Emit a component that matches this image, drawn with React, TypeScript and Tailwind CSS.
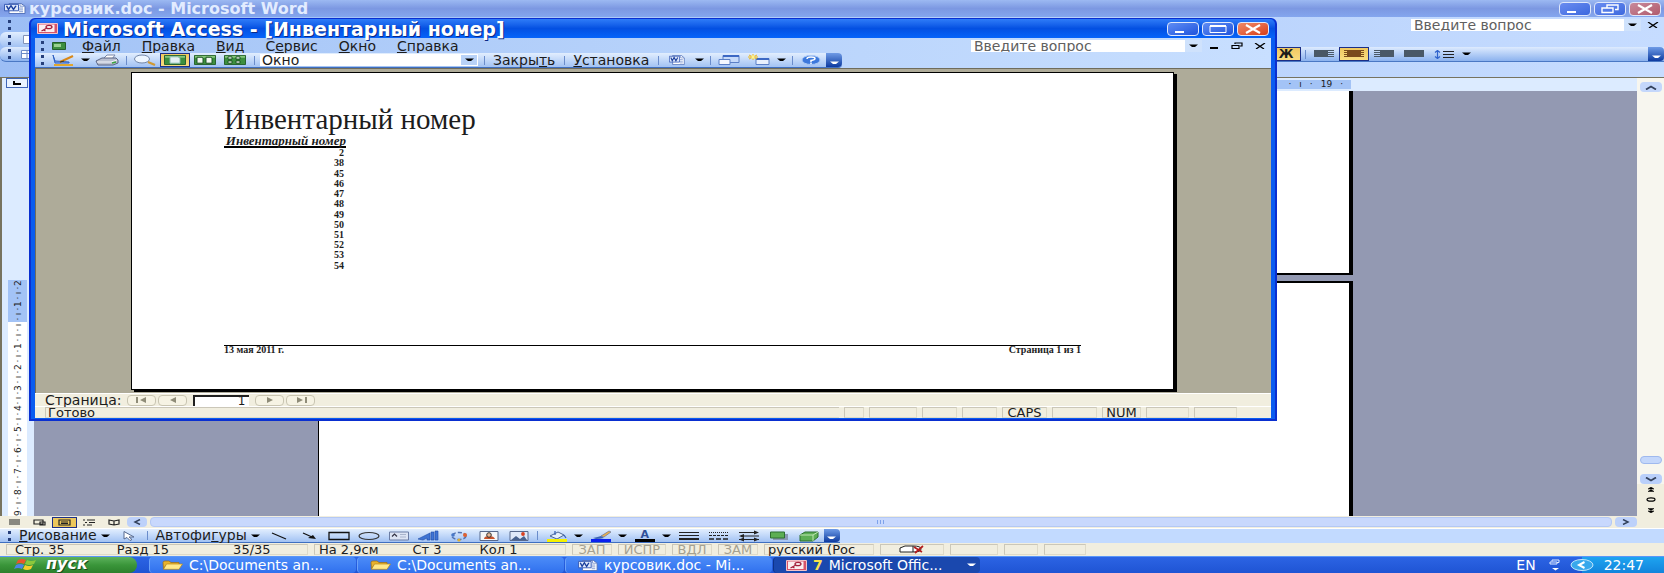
import { type ReactNode } from "react";

const reportRows = [2, 38, 45, 46, 47, 48, 49, 50, 51, 52, 53, 54];

const accessMenu = [
  { key: "Ф", rest: "айл", before: "" },
  { key: "П", rest: "равка", before: "" },
  { key: "В", rest: "ид", before: "" },
  { key: "е", rest: "рвис", before: "С" },
  { key: "О", rest: "кно", before: "" },
  { key: "С", rest: "правка", before: "" },
];

const rulerMarks = Array.from({ length: 45 }, (_, index) => {
  if (index % 4 === 1 || index % 4 === 3) return "·";
  if (index % 4 === 2) return "ı";
  const value = Math.abs(index / 4 - 2);
  return value === 0 ? "ı" : String(value);
});

function Svg({ children, className = "h-3 w-6", box = "0 0 24 12" }: { children: ReactNode; className?: string; box?: string }) {
  return (
    <svg aria-hidden="true" className={`shrink-0 ${className}`} fill="none" preserveAspectRatio="none" viewBox={box}>
      {children}
    </svg>
  );
}

function Caret({ className = "text-black" }: { className?: string }) {
  return (
    <Svg box="0 0 9 4" className={`h-1 w-[9px] ${className}`}>
      <path d="M0 .5h9L6 3H3z" fill="currentColor" />
    </Svg>
  );
}

function Grip() {
  return <span className="mx-1 h-[10px] w-[3px] shrink-0 border-l-[3px] border-dotted border-[#26407c]" />;
}

function Separator() {
  return (
    <span className="flex w-2 shrink-0 justify-center">
      <span className="h-[9px] w-px bg-[#6a8ccb]" />
    </span>
  );
}

function ToolButton({ active, children, label }: { active?: boolean; children: ReactNode; label: string }) {
  return (
    <button
      aria-label={label}
      className={`flex h-[14px] w-[30px] shrink-0 items-center justify-center ${
        active ? "border border-[#1c2f86] bg-gradient-to-b from-[#f0c860] to-[#f8dc80]" : ""
      }`}
      type="button"
    >
      {children}
    </button>
  );
}

function DropButton({ label }: { label: string }) {
  return (
    <button aria-label={label} className="flex h-[14px] w-[14px] shrink-0 items-center justify-center" type="button">
      <Caret />
    </button>
  );
}

function TextButton({ children }: { children: ReactNode }) {
  return (
    <button className="shrink-0 px-[5px] text-[14px] leading-[14px] whitespace-nowrap" type="button">
      {children}
    </button>
  );
}

function EndCap() {
  return (
    <button
      aria-label="Параметры панелей инструментов"
      className="flex w-4 shrink-0 items-end justify-center self-stretch rounded-r-sm bg-gradient-to-b from-[#6f9be6] to-[#0d3aa0] pb-[2px]"
      type="button"
    >
      <Caret className="text-white" />
    </button>
  );
}

function WordIcon({ className = "h-[11px] w-[22px]" }: { className?: string }) {
  return (
    <Svg box="0 0 22 12" className={className}>
      <path d="M5 .5h12l4 3v8H5z" fill="#fff" stroke="#5070b8" />
      <path d="M16 .5v3h5M15 5.5h4M15 7.5h4M15 9.5h4" stroke="#7d96cf" />
      <path d="M.5 1.500h14v7h-14z" fill="#dfe9fb" stroke="#3358b4" />
      <path d="M2.500 3l2 4 2.500-4 2.500 4 2.500-4" stroke="#1b3f9c" strokeWidth="1.500" />
    </Svg>
  );
}

function AccessIcon({ className = "h-[11px] w-[21px]" }: { className?: string }) {
  return (
    <Svg box="0 0 21 11" className={className}>
      <path d="M.5.5h20v10H.5z" fill="#d8546a" stroke="#f3c3c8" />
      <path d="M2 1.500h15.500v7.500H2z" fill="#fbeef0" />
      <ellipse cx="12" cy="4" rx="3" ry="1.700" stroke="#a3203a" strokeWidth="1.300" />
      <path d="M9.500 5.200L4.500 8M6.500 7l2 1" stroke="#a3203a" strokeWidth="1.300" />
    </Svg>
  );
}

function FolderIcon() {
  return (
    <Svg box="0 0 21 10" className="h-[10px] w-[21px]">
      <path d="M1 2.500Q1 1 3 1h4l2 1.500h8V5H4L1.500 9z" fill="#e8b22c" stroke="#9c6c10" strokeWidth=".7" />
      <path d="M4.500 4H20.500L17 9.300H1.500z" fill="#ffe98a" stroke="#b98718" strokeWidth=".7" />
    </Svg>
  );
}

function WindowButton({ kind, muted }: { kind: "minimize" | "maximize" | "restore" | "close"; muted?: boolean }) {
  const tone =
    kind === "close"
      ? muted
        ? "bg-gradient-to-br from-[#c88a9c] to-[#b05a6c]"
        : "bg-gradient-to-br from-[#f08a68] to-[#d83a10]"
      : muted
        ? "bg-gradient-to-br from-[#6a8cf0] to-[#3c68de]"
        : "bg-gradient-to-br from-[#5f8cf4] to-[#1f52dc]";

  return (
    <button
      aria-label={kind}
      className={`flex h-[14px] w-8 items-center justify-center rounded-sm border border-[#dfe8fb] ${tone}`}
      type="button"
    >
      <Svg box="0 0 20 10" className="h-[10px] w-5">
        {kind === "minimize" && <path d="M2 8h9" stroke="#fff" strokeWidth="2" />}
        {kind === "maximize" && (
          <>
            <path d="M2 2h16v6.500H2z" stroke="#fff" />
            <path d="M2 2h16" stroke="#fff" strokeWidth="2" />
          </>
        )}
        {kind === "restore" && (
          <path d="M7 3.500V1h11v4.500h-3M2 4h11v4.500H2z" stroke="#fff" strokeWidth="1.400" />
        )}
        {kind === "close" && <path d="M3 1l14 8M17 1L3 9" stroke="#fff" strokeWidth="2.200" />}
      </Svg>
    </button>
  );
}

function AskBox({ className }: { className: string }) {
  return (
    <div className={`flex h-3 items-stretch bg-white ${className}`}>
      <input
        aria-label="Введите вопрос"
        className="min-w-0 flex-1 bg-white px-[3px] text-[14px] leading-3 outline-none placeholder:text-[#606060]"
        placeholder="Введите вопрос"
      />
      <button aria-label="Открыть список" className="flex w-[17px] items-center justify-center bg-[#cfe2fc]" type="button">
        <Caret />
      </button>
    </div>
  );
}

function SmallClose() {
  return (
    <button aria-label="Закрыть окно" className="flex h-3 w-[23px] items-center justify-center" type="button">
      <Svg box="0 0 12 6" className="h-[6px] w-3">
        <path d="M1 0l9 6M11 0L2 6" stroke="#000" strokeWidth="1.300" />
      </Svg>
    </button>
  );
}

function GreenPages({ count }: { count: number }) {
  return (
    <Svg box="0 0 22 11" className="h-[10px] w-[22px]">
      <path d="M.5.5h21v10H.5z" fill="#3d8f3f" stroke="#245f2a" />
      <path d="M1 1h20v2H1z" fill="#86c77c" />
      {count === 1 && <path d="M6 2h8l2 1.500V9H6z" fill="#e4f0f4" stroke="#8ba" />}
      {count === 2 && <path d="M3 2.500h5l1 1V9H3zM12 2.500h5l1 1V9h-6z" fill="#f4f8f4" stroke="#175020" />}
      {count === 4 && <path d="M4 2h4v2.500H4zM12 2h4v2.500h-4zM4 6.500h4V9H4zM12 6.500h4V9h-4z" fill="#f4f8f4" stroke="#175020" />}
    </Svg>
  );
}

function StatusPanel({ children, className, muted }: { children?: ReactNode; className: string; muted?: boolean }) {
  return (
    <div
      className={`flex h-[11px] shrink-0 items-center border border-[#cbc7b8] border-r-[#dedac8] border-b-[#dedac8] px-[2px] text-[13px] leading-[10px] whitespace-nowrap ${
        muted ? "text-[#a5a190]" : "text-[#202020]"
      } ${className}`}
    >
      {children}
    </div>
  );
}

function AccessToolbar() {
  return (
    <div className="flex">
      <div className="flex h-[15px] items-center rounded-r-sm border-b border-[#3f6fc0] bg-gradient-to-b from-[#e2eefe] to-[#a2c2f3] pl-[2px]">
        <Grip />
        <ToolButton label="Вид">
          <Svg>
            <path d="M2 1l2 8h14V8L4 7z" fill="#88aef0" stroke="#2f5fc0" />
            <path d="M3 11h19" stroke="#e2a62c" strokeWidth="2" />
            <path d="M9 8L22 2" stroke="#d98818" strokeWidth="2" />
            <path d="M9 8l4-1" stroke="#333" />
          </Svg>
        </ToolButton>
        <DropButton label="Варианты вида" />
        <ToolButton label="Печать">
          <Svg>
            <path d="M8 5l4-4h8l-3 4z" fill="#fff" stroke="#7a86a8" />
            <path d="M1 7l6-3h14l2 2v3l-5 2H3z" fill="#b9bfd0" stroke="#5a6484" />
            <path d="M2 8h14l6-2" stroke="#f2f4fa" />
            <path d="M17 9l4-1" stroke="#3aa440" strokeWidth="1.500" />
          </Svg>
        </ToolButton>
        <Separator />
        <ToolButton label="Масштаб">
          <Svg>
            <ellipse cx="9" cy="5" fill="#eef6ff" rx="7.500" ry="4" stroke="#7286a8" />
            <path d="M15 8l7 3" stroke="#d09a34" strokeWidth="2.200" />
          </Svg>
        </ToolButton>
        <ToolButton active label="Одна страница">
          <GreenPages count={1} />
        </ToolButton>
        <ToolButton label="Две страницы">
          <GreenPages count={2} />
        </ToolButton>
        <ToolButton label="Несколько страниц">
          <GreenPages count={4} />
        </ToolButton>
        <Separator />
        <div className="relative mx-[2px] w-[218px]">
          <select
            aria-label="Масштаб страницы"
            className="block h-3 w-full appearance-none bg-white px-[2px] text-[14px] leading-3 outline-none"
            defaultValue="Окно"
          >
            <option>Окно</option>
          </select>
          <span className="pointer-events-none absolute inset-y-px right-px flex w-4 items-center justify-center bg-[#b8d2f8]">
            <Caret />
          </span>
        </div>
        <Separator />
        <TextButton>
          Закры<u>т</u>ь
        </TextButton>
        <Separator />
        <TextButton>
          <u>У</u>становка
        </TextButton>
        <Separator />
        <ToolButton label="Связи с Office">
          <WordIcon className="h-[10px] w-4" />
        </ToolButton>
        <DropButton label="Варианты связи" />
        <Separator />
        <ToolButton label="Окно базы данных">
          <Svg>
            <path d="M6 1.500h16v7H6z" fill="#c6dafa" stroke="#5b7fc6" />
            <path d="M6 2h16" stroke="#3c68c4" strokeWidth="2" />
            <path d="M2 5.500h11v5H2z" fill="#f4f8ff" stroke="#5b7fc6" />
          </Svg>
        </ToolButton>
        <ToolButton label="Новый объект">
          <Svg>
            <path d="M9 4.500h13v6H9z" fill="#e8f0fe" stroke="#5b7fc6" />
            <path d="M9 5h13" stroke="#3c68c4" strokeWidth="2" />
            <path d="M1 3h10M6 0v6M2 1l8 4M10 1L2 5" stroke="#f0b818" />
            <circle cx="6" cy="3" fill="#fff38a" r="1.700" />
          </Svg>
        </ToolButton>
        <DropButton label="Варианты объекта" />
        <Separator />
        <ToolButton label="Справка">
          <Svg>
            <ellipse cx="12" cy="6" fill="#3c78dc" rx="9" ry="4.500" stroke="#a9c8f6" />
            <path d="M8 5q0-2 4-2t4 1.500Q16 6 12 6.500V8M12 8.500v1.500" stroke="#fff" strokeWidth="1.500" />
          </Svg>
        </ToolButton>
        <EndCap />
      </div>
    </div>
  );
}

function Report() {
  return (
    <div className="border border-black bg-white px-[92px] pt-9 pb-9 font-['Liberation_Serif',serif] shadow-[3px_2px_0_#000]">
      <h1 className="text-[29px] leading-5 whitespace-nowrap">Инвентарный номер</h1>
      <table className="mt-[7px] h-[135px] w-[122px] border-collapse">
        <thead>
          <tr>
            <th className="border-b-2 border-black text-right text-[13px] leading-[10px] font-bold whitespace-nowrap italic">
              Инвентарный номер
            </th>
          </tr>
        </thead>
        <tbody>
          {reportRows.map((row) => (
            <tr key={row}>
              <td className="pr-[2px] text-right text-[10px] leading-[10px] font-bold">{row}</td>
            </tr>
          ))}
        </tbody>
      </table>
      <div className="mt-[74px] flex justify-between border-t border-black text-[10px] leading-[7px] font-bold">
        <span>13 мая 2011 г.</span>
        <span>Страница 1 из 1</span>
      </div>
    </div>
  );
}

function RecordButton({ label, path }: { label: string; path: string }) {
  return (
    <button
      aria-label={label}
      className="flex h-[11px] w-[29px] items-center justify-center rounded-sm border border-[#c9c5b2] bg-[#f6f3e4]"
      type="button"
    >
      <Svg box="0 0 14 6" className="h-[6px] w-[14px]">
        <path d={path} fill="#8f8c78" />
      </Svg>
    </button>
  );
}

function AccessWindow() {
  return (
    <section
      aria-label="Microsoft Access"
      className="absolute top-[18px] left-[29px] w-3/4 rounded-t-md border-2 border-t border-[#0a2fd0] bg-[#0a5cf0]"
    >
      <header className="flex h-[19px] items-center rounded-t-md bg-gradient-to-b from-[#2f7cf8] via-[#0450e2] to-[#0664fa] pr-[6px] pl-[6px]">
        <AccessIcon />
        <h2 className="ml-[5px] text-[19px] leading-[18px] font-bold whitespace-nowrap text-white [text-shadow:1px_1px_0_#0a2a88]">
          Microsoft Access - [Инвентарный номер]
        </h2>
        <div className="ml-auto flex gap-[3px]">
          <WindowButton kind="minimize" />
          <WindowButton kind="maximize" />
          <WindowButton kind="close" />
        </div>
      </header>
      <div className="mx-1">
        <div className="bg-gradient-to-r from-[#a4c4f6] to-[#c8dfff]">
          <nav className="flex h-[15px] items-center pl-[2px]">
            <Grip />
            <Svg box="0 0 14 8" className="ml-1 h-2 w-[14px]">
              <path d="M.5.5h13v7H.5z" fill="#3d8f3f" stroke="#245f2a" />
              <path d="M2 2h7v3H2z" fill="#9ad290" />
            </Svg>
            <div className="ml-4 flex gap-[21px]">
              {accessMenu.map((item) => (
                <button className="text-[14px] leading-[14px]" key={item.rest} type="button">
                  {item.before}
                  <u>{item.key}</u>
                  {item.rest}
                </button>
              ))}
            </div>
            <AskBox className="ml-auto w-[231px]" />
            <button aria-label="Свернуть окно" className="flex h-3 w-[23px] items-center justify-center" type="button">
              <span className="mt-1 h-[2px] w-2 bg-black" />
            </button>
            <button aria-label="Восстановить окно" className="flex h-3 w-[23px] items-center justify-center" type="button">
              <Svg box="0 0 12 7" className="h-[7px] w-3">
                <path d="M4 2V1h7v3H9M1 3.500h7v3H1z" stroke="#000" strokeWidth="1.200" />
              </Svg>
            </button>
            <SmallClose />
          </nav>
          <AccessToolbar />
        </div>
        <main className="border-t border-l border-[#6f6c5c] bg-[#aeab99] pt-[3px] pr-[97px] pb-[3px] pl-[95px]">
          <Report />
        </main>
        <div className="flex h-[13px] items-center gap-[2px] border-t border-white bg-[#f1eedf] pl-[10px]">
          <label className="mr-1 text-[14px] leading-3" htmlFor="report-page">
            Страница:
          </label>
          <RecordButton label="Первая страница" path="M1 0h2v6H1zM11 0v6L5 3z" />
          <RecordButton label="Предыдущая страница" path="M10 0v6L4 3z" />
          <input
            className="mx-1 h-[11px] w-14 border-t-2 border-l-2 border-[#202020] bg-white pr-1 text-right text-[12px] leading-[9px] outline-none"
            defaultValue="1"
            id="report-page"
          />
          <RecordButton label="Следующая страница" path="M4 0v6l6-3z" />
          <RecordButton label="Последняя страница" path="M3 0v6l6-3zM11 0h2v6h-2z" />
        </div>
        <footer className="flex h-[12px] items-center gap-[5px] border-t border-white bg-[#f1eedf] pr-[34px] pl-[10px]">
          <StatusPanel className="mr-auto min-w-0 flex-1 border-r-0">Готово</StatusPanel>
          <StatusPanel className="w-5" />
          <StatusPanel className="w-12" />
          <StatusPanel className="w-[35px]" />
          <StatusPanel className="w-[35px]" />
          <StatusPanel className="w-[45px] justify-center">CAPS</StatusPanel>
          <StatusPanel className="w-[45px]" />
          <StatusPanel className="w-[39px] justify-center">NUM</StatusPanel>
          <StatusPanel className="w-[43px]" />
          <StatusPanel className="w-[43px]" />
        </footer>
      </div>
      <div className="h-px" />
    </section>
  );
}

function AlignIcon({ side, tone }: { side: "left" | "center" | "right" | "both"; tone: string }) {
  return (
    <Svg box="0 0 20 8" className="h-2 w-5">
      <path d="M0 .5h20M0 2.500h20M0 4.500h20M0 6.500h20" stroke={tone} />
      {side === "left" && <path d="M0 0h14v7H0z" fill={tone} />}
      {side === "center" && <path d="M3 0h14v7H3z" fill={tone} />}
      {side === "right" && <path d="M6 0h14v7H6z" fill={tone} />}
      {side === "both" && <path d="M0 0h20v7H0z" fill={tone} />}
    </Svg>
  );
}

function WordHeader() {
  return (
    <>
      <header className="flex h-[17px] shrink-0 items-center bg-gradient-to-b from-[#9cb9f2] via-[#7c98e2] to-[#84a6ee] pr-[3px] pl-1">
        <WordIcon />
        <h1 className="ml-[3px] text-[16px] leading-4 font-bold text-[#e2ecff]">курсовик.doc - Microsoft Word</h1>
        <div className="ml-auto flex gap-[3px]">
          <WindowButton kind="minimize" muted />
          <WindowButton kind="restore" muted />
          <WindowButton kind="close" muted />
        </div>
      </header>
      <div className="h-[60px] shrink-0 bg-gradient-to-r from-[#9cbef5] to-[#c6dcff]">
        <div className="flex h-[15px] items-center justify-between pl-1">
          <Grip />
          <div className="flex items-center">
            <AskBox className="w-[230px]" />
            <SmallClose />
          </div>
        </div>
        <div className="flex h-[15px] items-center rounded-l-md">
          <div className="flex h-[15px] w-1/2 items-center rounded-l-md bg-gradient-to-b from-[#e2eefe] to-[#a2c2f3] pl-1">
            <Grip />
            <Svg box="0 0 12 9" className="ml-2 h-[9px] w-3">
              <path d="M.5.5h11v8H.5z" fill="#fff" stroke="#8292b8" />
            </Svg>
          </div>
        </div>
        <div className="flex h-[15px] items-center rounded-l-md border-b border-[#4a78c4] bg-gradient-to-b from-[#deebfe] to-[#8cb2ee] pl-1">
          <Grip />
          <Svg box="0 0 16 9" className="ml-[6px] h-[9px] w-4">
            <path d="M.5.5h15v8H.5z" fill="#fff" stroke="#6f8cc8" />
            <path d="M0 3.500h16M6 0v9" stroke="#6f8cc8" />
            <path d="M9 7l6-5" stroke="#d98818" strokeWidth="2" />
          </Svg>
          <div className="ml-auto flex items-center self-stretch">
            <ToolButton active label="Полужирный">
              <span className="text-[12px] leading-3 font-bold">Ж</span>
            </ToolButton>
            <Separator />
            <ToolButton label="По левому краю">
              <AlignIcon side="left" tone="#4a5866" />
            </ToolButton>
            <ToolButton active label="По центру">
              <AlignIcon side="center" tone="#7a4a1c" />
            </ToolButton>
            <ToolButton label="По правому краю">
              <AlignIcon side="right" tone="#4a5866" />
            </ToolButton>
            <ToolButton label="По ширине">
              <AlignIcon side="both" tone="#4a5866" />
            </ToolButton>
            <ToolButton label="Междустрочный интервал">
              <Svg box="0 0 20 9" className="h-[9px] w-5">
                <path d="M3.500 1v7M1 2.500L3.500.5 6 2.500M1 6.500l2.500 2 2.500-2" stroke="#2f62cc" strokeWidth="1.200" />
                <path d="M9 1.500h11M9 4.500h11M9 7.500h11" stroke="#222" />
              </Svg>
            </ToolButton>
            <DropButton label="Варианты интервала" />
            <span className="w-[175px]" />
            <EndCap />
          </div>
        </div>
      </div>
    </>
  );
}

function WordDocument() {
  return (
    <div className="flex min-h-0 flex-1 border-t border-l-2 border-[#77735f] bg-[#dcebff]">
      <div className="flex w-8 shrink-0 flex-col items-start">
        <button
          aria-label="Позиция табуляции"
          className="ml-1 flex h-[10px] w-[22px] shrink-0 items-center justify-center border border-[#3f66b8] bg-[#eaf3ff]"
          type="button"
        >
          <span className="h-1 w-2 border-b-2 border-l-2 border-black" />
        </button>
        <div className="mt-[192px] ml-[6px] grid w-[19px] flex-1 auto-rows-fr bg-[linear-gradient(#a3c3f6_0_42px,#fff_42px)] text-[9px] leading-none">
          {rulerMarks.map((mark, index) => (
            <span className="flex h-1 -rotate-90 items-center justify-center self-center" key={index}>
              {mark}
            </span>
          ))}
        </div>
      </div>
      <div className="flex min-w-0 flex-1 flex-col">
        <div className="flex h-[13px] shrink-0 items-center">
          <div className="mr-[286px] ml-auto flex h-[9px] w-20 items-center justify-end gap-2 bg-[#a3c3f6] pr-2 text-[9px] leading-[9px]">
            <span>·</span>
            <span>ı</span>
            <span>·</span>
            <span>19</span>
            <span>·</span>
          </div>
        </div>
        <div className="flex flex-1 flex-col gap-[6px] bg-[#9399b2] px-[284px]">
          <div className="h-[184px] border-r-4 border-b-2 border-l border-black bg-white" />
          <div className="flex-1 border-t-2 border-r-4 border-l border-black bg-white" />
        </div>
      </div>
      <div className="flex w-[27px] shrink-0 flex-col items-center bg-[#f7f6ef] pt-1">
        <button aria-label="Прокрутить вверх" className="flex h-[10px] w-[22px] items-center justify-center rounded-sm bg-[#c4d7fb]" type="button">
          <Svg box="0 0 12 5" className="h-[5px] w-3">
            <path d="M1 4.500l5-3 5 3" stroke="#33415c" strokeWidth="1.800" />
          </Svg>
        </button>
        <span className="mt-auto mb-[10px] h-2 w-[22px] rounded-sm border border-[#9fb9ee] bg-[#c4d7fb]" />
        <button aria-label="Прокрутить вниз" className="flex h-[10px] w-[22px] items-center justify-center rounded-sm bg-[#b9cffa]" type="button">
          <Svg box="0 0 12 5" className="h-[5px] w-3">
            <path d="M1 .5l5 3 5-3" stroke="#33415c" strokeWidth="1.800" />
          </Svg>
        </button>
        <div className="flex h-8 w-full flex-col items-center justify-around bg-[#f1eedf]">
          <Svg box="0 0 8 5" className="h-[5px] w-2">
            <path d="M4 0l3 2H1zM4 2.500l3 2H1z" fill="#000" stroke="#000" strokeWidth=".5" />
          </Svg>
          <Svg box="0 0 10 5" className="h-[5px] w-[10px]">
            <ellipse cx="5" cy="2.500" rx="4" ry="1.700" stroke="#000" strokeWidth="1.200" />
          </Svg>
          <Svg box="0 0 8 5" className="h-[5px] w-2">
            <path d="M4 2.500L7 .5H1zM4 5l3-2H1z" fill="#000" stroke="#000" strokeWidth=".5" />
          </Svg>
        </div>
      </div>
    </div>
  );
}

const viewIcons = [
  { label: "Обычный режим", path: "M1 1h11M1 3h11M1 5h11" },
  { label: "Веб-документ", path: "M1 1h9v4H1zM7 3h5v3H7z" },
  { label: "Разметка страницы", path: "M1 1h11v5H1zM3 3h7M3 4.500h7" },
  { label: "Структура", path: "M0 1h2M4 1h8M2 3.500h2M6 3.500h6M0 6h2M4 6h5" },
  { label: "Режим чтения", path: "M1 1l5 1 5-1v4l-5 1-5-1zM6 2v4" },
];

function ViewBar() {
  return (
    <div className="flex h-[12px] shrink-0 items-center bg-[#f1eedf] pr-[27px] pl-[2px]">
      {viewIcons.map((icon, index) => (
        <button
          aria-label={icon.label}
          className={`flex h-[11px] w-[25px] items-center justify-center ${
            index === 2 ? "border border-[#1c2f86] bg-[#ecc75c]" : ""
          }`}
          key={icon.label}
          type="button"
        >
          <Svg box="0 0 13 7" className="h-[7px] w-[13px]">
            <path d={icon.path} stroke="#222" strokeWidth="1.200" />
          </Svg>
        </button>
      ))}
      <button aria-label="Прокрутить влево" className="flex h-[10px] w-5 items-center justify-center rounded-sm bg-[#bdd1fa]" type="button">
        <Svg box="0 0 8 6" className="h-[6px] w-2">
          <path d="M7 .5L2 3l5 2.500" stroke="#33415c" strokeWidth="1.500" />
        </Svg>
      </button>
      <div className="mx-[3px] flex h-[10px] flex-1 items-center justify-center rounded-sm border border-[#b4c8f4] bg-[#c8d8fd]">
        <span className="h-1 w-[9px] bg-[repeating-linear-gradient(90deg,#7ea2ea_0_1px,transparent_1px_3px)]" />
      </div>
      <button aria-label="Прокрутить вправо" className="flex h-[10px] w-[22px] items-center justify-center rounded-sm bg-[#bdd1fa]" type="button">
        <Svg box="0 0 8 6" className="h-[6px] w-2">
          <path d="M1 .5L6 3 1 5.500" stroke="#33415c" strokeWidth="1.500" />
        </Svg>
      </button>
    </div>
  );
}

function DrawingToolbar() {
  return (
    <div className="flex h-[15px] shrink-0 border-t border-white bg-[#c2daff]">
      <div className="flex items-center border-b border-[#3f6fc0] bg-gradient-to-b from-[#e2eefe] to-[#a2c2f3] pl-1">
        <Grip />
        <button className="flex items-center gap-1 px-1 text-[14px] leading-[13px]" type="button">
          <span>
            <u>Р</u>исование
          </span>
          <Caret />
        </button>
        <ToolButton label="Выбор объектов">
          <Svg box="0 0 14 10" className="h-[10px] w-[14px]">
            <path d="M2 .5v7.500l3-1.500 3 3 2-1-3-2.500h5z" fill="#fff" stroke="#55688f" />
          </Svg>
        </ToolButton>
        <Separator />
        <button className="flex items-center gap-1 px-1 text-[14px] leading-[13px]" type="button">
          <span>
            Автофи<u>г</u>уры
          </span>
          <Caret />
        </button>
        <ToolButton label="Линия">
          <Svg>
            <path d="M5 3l14 6" stroke="#111" strokeWidth="1.200" />
          </Svg>
        </ToolButton>
        <ToolButton label="Стрелка">
          <Svg>
            <path d="M6 3l9 4" stroke="#111" strokeWidth="1.200" />
            <path d="M19 9l-8-1 5-3z" fill="#111" />
          </Svg>
        </ToolButton>
        <ToolButton label="Прямоугольник">
          <Svg>
            <path d="M2 2.500h20v7H2z" stroke="#111" strokeWidth="1.300" />
          </Svg>
        </ToolButton>
        <ToolButton label="Овал">
          <Svg>
            <ellipse cx="12" cy="6" rx="10" ry="3.500" stroke="#333" strokeWidth="1.200" />
          </Svg>
        </ToolButton>
        <ToolButton label="Надпись">
          <Svg>
            <path d="M2.500 2h19v8h-19z" fill="#dce4f4" stroke="#6a7ca4" />
            <path d="M5 6.500L7.500 4 10 6.500" stroke="#334" strokeWidth="1.200" />
            <path d="M13 4.500h6M13 7h6" stroke="#a9b4cc" />
          </Svg>
        </ToolButton>
        <ToolButton label="Объект WordArt">
          <Svg>
            <path d="M1 9L13 3v7h-3V8L6 10zM14 2h3v8h-3zM18 1h3v9h-3z" fill="#3f74d4" stroke="#1f4ba4" strokeWidth=".6" />
          </Svg>
        </ToolButton>
        <ToolButton label="Диаграмма">
          <Svg>
            <ellipse cx="12" cy="6" rx="7" ry="3.500" stroke="#5272b0" strokeDasharray="4 2" strokeWidth="1.500" />
            <circle cx="18" cy="5" fill="#e06030" r="2" />
            <circle cx="6" cy="5" fill="#4878c8" r="1.800" />
            <circle cx="12" cy="10" fill="#e0b030" r="1.600" />
          </Svg>
        </ToolButton>
        <ToolButton label="Картинка">
          <Svg>
            <path d="M3 1.500h18v9H3z" fill="#f4f6fa" stroke="#57688c" />
            <path d="M7 9q0-3 5-3t6 3z" fill="#c8522c" />
            <circle cx="12" cy="5" fill="#e8b898" r="2.300" stroke="#333" />
          </Svg>
        </ToolButton>
        <ToolButton label="Рисунок">
          <Svg>
            <path d="M3 1.500h18v9H3z" fill="#dfe9fa" stroke="#57688c" />
            <path d="M4 10l5-4 4 3 4-3 3 4z" fill="#47618f" />
            <circle cx="16" cy="4" fill="#d84020" r="1.900" />
          </Svg>
        </ToolButton>
        <Separator />
        <ToolButton label="Цвет заливки">
          <Svg>
            <path d="M5 6l8-4 6 3-7 4z" fill="#e6f0fc" stroke="#4a6698" />
            <path d="M10 1v4M19 5l2 3" stroke="#3a64b4" strokeWidth="1.300" />
            <path d="M2 10.500h20" stroke="#f6f200" strokeWidth="3" />
          </Svg>
        </ToolButton>
        <DropButton label="Варианты заливки" />
        <ToolButton label="Цвет линий">
          <Svg>
            <path d="M4 8q5-1 8-2l3 2q-4 1-8 1z" fill="#3a64b4" />
            <path d="M12 6l8-5 2 1-7 5z" fill="#e8b050" stroke="#5a6890" strokeWidth=".6" />
            <path d="M2 10.500h20" stroke="#0a20f0" strokeWidth="3" />
          </Svg>
        </ToolButton>
        <DropButton label="Варианты линий" />
        <ToolButton label="Цвет шрифта">
          <span className="flex h-3 w-5 flex-col items-center border-b-[3px] border-black text-[11px] leading-[9px] font-bold text-[#2f4f98]">A</span>
        </ToolButton>
        <DropButton label="Варианты шрифта" />
        <ToolButton label="Тип линии">
          <Svg>
            <path d="M2 2.500h20M2 5.500h20" stroke="#222" />
            <path d="M2 9h20" stroke="#222" strokeWidth="2" />
          </Svg>
        </ToolButton>
        <ToolButton label="Тип штриха">
          <Svg>
            <path d="M2 2.500h20" stroke="#222" strokeDasharray="1 1" />
            <path d="M2 5.500h20" stroke="#222" strokeDasharray="3 1" />
            <path d="M2 9h20" stroke="#222" strokeDasharray="5 2" strokeWidth="1.500" />
          </Svg>
        </ToolButton>
        <ToolButton label="Вид стрелки">
          <Svg>
            <path d="M2 2.500h18M4 6h18M2 9.500h20" stroke="#222" />
            <path d="M22 2.500L17 .5v4zM2 6l5-2v4zM22 9.500l-5-2v4zM2 9.500l5-2v4z" fill="#222" />
          </Svg>
        </ToolButton>
        <ToolButton label="Тень">
          <Svg>
            <path d="M6 4h15v6H6z" fill="#8a98b4" />
            <path d="M3.500 2h14v6h-14z" fill="#5cae54" stroke="#2c6e30" />
          </Svg>
        </ToolButton>
        <ToolButton label="Объем">
          <Svg>
            <path d="M3 5l5-3h13v5l-5 4H3z" fill="#5cae54" stroke="#2c6e30" />
            <path d="M3 5h13l5-3M16 5v6" stroke="#bfe6b4" />
          </Svg>
        </ToolButton>
        <EndCap />
      </div>
    </div>
  );
}

function WordStatus() {
  return (
    <footer className="flex h-[13px] shrink-0 items-center gap-[6px] bg-[#f1eedf] pl-[6px]">
      <StatusPanel className="w-[302px] gap-[52px] pl-2">
        <span>Стр. 35</span>
        <span>Разд 15</span>
        <span className="ml-3">35/35</span>
      </StatusPanel>
      <StatusPanel className="w-[252px] gap-[34px] pl-1">
        <span>На 2,9см</span>
        <span>Ст 3</span>
        <span className="ml-1">Кол 1</span>
      </StatusPanel>
      <StatusPanel className="w-10 justify-center" muted>ЗАП</StatusPanel>
      <StatusPanel className="w-12 justify-center" muted>ИСПР</StatusPanel>
      <StatusPanel className="w-10 justify-center" muted>ВДЛ</StatusPanel>
      <StatusPanel className="w-10 justify-center" muted>ЗАМ</StatusPanel>
      <StatusPanel className="w-[110px] pl-[3px]">русский (Рос</StatusPanel>
      <StatusPanel className="w-16 justify-center">
        <Svg box="0 0 26 9" className="h-[9px] w-[26px]">
          <path d="M1 3l5-2h8v6H1zM14 1q8 0 8 3t-8 3" fill="#fff" stroke="#222" />
          <path d="M15 2l8 5M24 1l-8 7" stroke="#b41c1c" strokeWidth="1.700" />
        </Svg>
      </StatusPanel>
      <StatusPanel className="w-12" />
      <StatusPanel className="w-[34px]" />
      <StatusPanel className="w-[42px]" />
    </footer>
  );
}

function TaskButton({ active, children, icon }: { active?: boolean; children: ReactNode; icon: ReactNode }) {
  return (
    <button
      className={`flex h-4 w-[207px] items-center gap-[6px] rounded-sm border-l pl-3 text-[14px] leading-[14px] whitespace-nowrap text-white ${
        active ? "border-[#0d3288] bg-[#1a48ae]" : "border-[#6ba2fa] bg-gradient-to-b from-[#4c8cf8] to-[#3070ee]"
      }`}
      type="button"
    >
      {icon}
      {children}
    </button>
  );
}

function Taskbar() {
  return (
    <nav className="flex h-[17px] shrink-0 items-center border-t border-[#5a96f8] bg-gradient-to-b from-[#2c64e4] to-[#1f54d4]">
      <button
        className="flex w-[137px] items-center gap-2 self-stretch rounded-r-lg bg-gradient-to-b from-[#5cb25c] via-[#3a963a] to-[#2c802c] pb-[3px] pl-[14px] text-[16px] leading-3 font-bold text-white italic [text-shadow:1px_1px_0_#1c4c1c]"
        type="button"
      >
        <Svg box="0 0 24 12" className="h-3 w-6">
          <path d="M4 2q4-2 8 0l-2 4Q6 4 2 6z" fill="#e8562c" />
          <path d="M13 2q4 2 9 0l-2 4q-5 2-9 0z" fill="#8cc83c" />
          <path d="M2 7q4-2 8 0l-2 4Q4 9 0 11z" fill="#4c84e8" />
          <path d="M11 7q4 2 8 0l-2 4q-4 2-8 0z" fill="#f4cc2c" />
        </Svg>
        пуск
      </button>
      <div className="ml-3 flex gap-px">
        <TaskButton icon={<FolderIcon />}>C:\Documents an...</TaskButton>
        <TaskButton icon={<FolderIcon />}>C:\Documents an...</TaskButton>
        <TaskButton icon={<WordIcon className="h-[11px] w-5" />}>курсовик.doc - Mi...</TaskButton>
        <TaskButton active icon={<AccessIcon />}>
          <span className="font-bold text-[#f6e04c]">7</span>
          <span>Microsoft Offic...</span>
          <span className="mr-1 ml-auto">
            <Caret className="text-white" />
          </span>
        </TaskButton>
      </div>
      <div className="ml-auto flex items-center self-stretch text-[14px] leading-[14px] text-white">
        <span>EN</span>
        <Svg box="0 0 14 12" className="mr-5 ml-3 h-3 w-[14px]">
          <path d="M4 2.500V1h7v2.500H9M2 3h7v2H2z" stroke="#e2ecff" />
          <path d="M4 9h7l-3.500 2.500z" fill="#fff" />
        </Svg>
        <div className="flex items-center self-stretch bg-gradient-to-b from-[#1ea4f0] to-[#1284dc] pr-5">
          <button aria-label="Скрытые значки" className="mr-[10px] -ml-3" type="button">
            <Svg box="0 0 24 12" className="h-3 w-6">
              <ellipse cx="12" cy="6" fill="#38a8ec" rx="11" ry="5.500" stroke="#bfe6fc" />
              <path d="M14.500 3L9 6l5.500 3" stroke="#fff" strokeWidth="2" />
            </Svg>
          </button>
          <span>22:47</span>
        </div>
      </div>
    </nav>
  );
}

export default function App() {
  return (
    <div className="relative flex min-h-screen flex-col overflow-hidden bg-[#c2daff] font-['DejaVu_Sans',sans-serif] text-[#1c1c1c]">
      <WordHeader />
      <WordDocument />
      <ViewBar />
      <DrawingToolbar />
      <WordStatus />
      <Taskbar />
      <AccessWindow />
    </div>
  );
}
